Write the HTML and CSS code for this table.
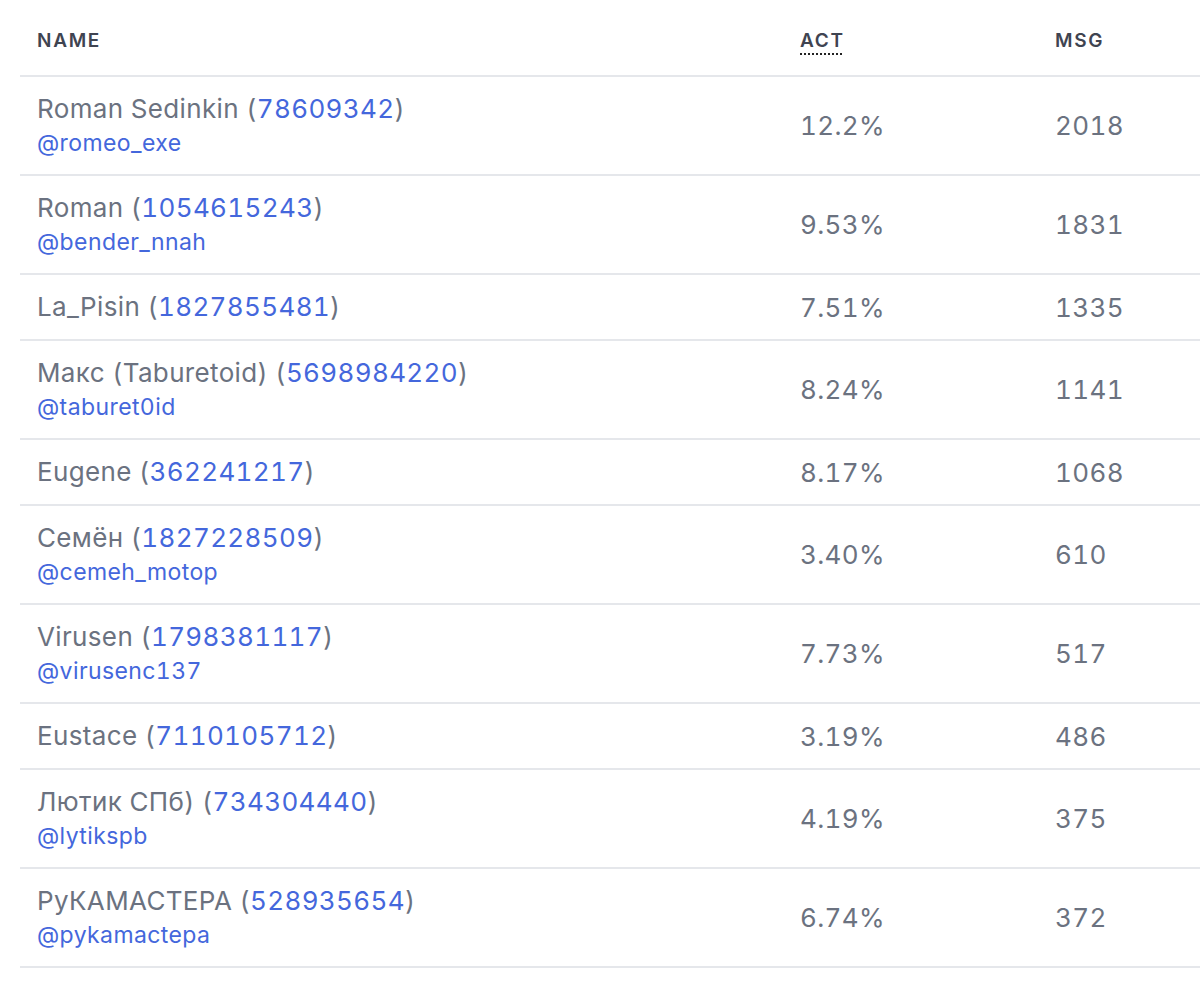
FILE: index.html
```html
<!DOCTYPE html>
<html>
<head>
<meta charset="utf-8">
<link rel="stylesheet" href="styles.css">
</head>
<body>
<div class="wrap">
<table class="stats">
  <colgroup><col class="c-name"><col class="c-act"><col class="c-msg"></colgroup>
  <thead>
    <tr><th>Name</th><th><abbr class="hint" title="Activity">Act</abbr></th><th>Msg</th></tr>
  </thead>
  <tbody>
    <tr><td><div class="nm">Roman Sedinkin (<a class="uid">78609342</a>)</div><a class="handle">@romeo_exe</a></td><td>12.2%</td><td>2018</td></tr>
    <tr><td><div class="nm">Roman (<a class="uid">1054615243</a>)</div><a class="handle">@bender_nnah</a></td><td>9.53%</td><td>1831</td></tr>
    <tr><td><div class="nm">La_Pisin (<a class="uid">1827855481</a>)</div></td><td>7.51%</td><td>1335</td></tr>
    <tr><td><div class="nm">Макс (Taburetoid) (<a class="uid">5698984220</a>)</div><a class="handle">@taburet0id</a></td><td>8.24%</td><td>1141</td></tr>
    <tr><td><div class="nm">Eugene (<a class="uid">362241217</a>)</div></td><td>8.17%</td><td>1068</td></tr>
    <tr><td><div class="nm">Семён (<a class="uid">1827228509</a>)</div><a class="handle">@cemeh_motop</a></td><td>3.40%</td><td>610</td></tr>
    <tr><td><div class="nm">Virusen (<a class="uid">1798381117</a>)</div><a class="handle">@virusenc137</a></td><td>7.73%</td><td>517</td></tr>
    <tr><td><div class="nm">Eustace (<a class="uid">7110105712</a>)</div></td><td>3.19%</td><td>486</td></tr>
    <tr><td><div class="nm">Лютик СПб) (<a class="uid">734304440</a>)</div><a class="handle">@lytikspb</a></td><td>4.19%</td><td>375</td></tr>
    <tr><td><div class="nm">РуКАМАСТЕРА (<a class="uid">528935654</a>)</div><a class="handle">@pykamactepa</a></td><td>6.74%</td><td>372</td></tr>
  </tbody>
</table>
</div>
</body>
</html>
```
FILE: styles.css
```css
html, body {
  margin: 0;
  padding: 0;
  background: #ffffff;
}
body {
  font-family: Inter, "Noto Sans", sans-serif;
  color: #6b7280;
  overflow: hidden;
}
.wrap {
  padding-left: 20px;
}
.stats {
  width: 1180px;
  border-collapse: collapse;
  table-layout: fixed;
}
.c-name { width: 763px; }
.c-act { width: 255px; }
.c-msg { width: 162px; }
.stats th {
  text-align: left;
  font-size: 19px;
  font-weight: 600;
  line-height: 27px;
  letter-spacing: 1.7px;
  text-transform: uppercase;
  color: #3f4451;
  padding: 27px 17px 21px;
  border-bottom: 2px solid #e5e7eb;
}
.hint {
  text-decoration: underline dotted #222;
  text-underline-offset: 6px;
  text-decoration-thickness: 2px;
  cursor: help;
}
.stats td {
  padding: 15.5px 17px;
  font-size: 26px;
  line-height: 33px;
  letter-spacing: 0.35px;
  vertical-align: middle;
  border-bottom: 2px solid #e5e7eb;
  color: #6b7280;
  font-variant-numeric: tabular-nums;
}
.nm {
  line-height: 32px;
}
.uid, .handle {
  color: #4467dc;
  text-decoration: none;
}
.handle {
  display: block;
  font-size: 23px;
  line-height: 32px;
  padding-top: 2px;
  letter-spacing: 0.4px;
}
```
